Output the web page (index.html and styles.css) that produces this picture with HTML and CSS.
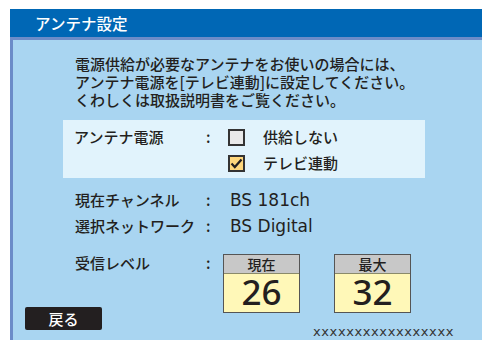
FILE: index.html
```html
<!DOCTYPE html>
<html lang="ja">
<head>
    <meta charset="UTF-8">
    <meta name="viewport" content="width=device-width, initial-scale=1.0">
    <title>アンテナ設定</title>
    <link rel="stylesheet" href="styles.css">
</head>
<body>
    <div class="window">
        <div class="titlebar">アンテナ設定</div>
        <div class="panel">
            <p class="notice">電源供給が必要なアンテナをお使いの場合には、<br>アンテナ電源を[テレビ連動]に設定してください。<br>くわしくは取扱説明書をご覧ください。</p>

            <div class="option-box">
                <div class="row">
                    <span class="label">アンテナ電源</span>
                    <span class="colon">:</span>
                    <div class="choices">
                        <div class="choice"><span class="check"></span>供給しない</div>
                        <div class="choice">
                            <span class="check on">
                                <svg width="13" height="13" viewBox="0 0 13 13"><polyline points="1.5,6.5 4.8,10 11.5,2.5" fill="none" stroke="#231f20" stroke-width="2.2"/></svg>
                            </span>テレビ連動
                        </div>
                    </div>
                </div>
            </div>

            <div class="row info first">
                <span class="label">現在チャンネル</span>
                <span class="colon">:</span>
                <span class="value">BS 181ch</span>
            </div>
            <div class="row info">
                <span class="label">選択ネットワーク</span>
                <span class="colon">:</span>
                <span class="value">BS Digital</span>
            </div>
            <div class="row info level-row">
                <span class="label">受信レベル</span>
                <span class="colon">:</span>
                <div class="levels">
                    <div class="level">
                        <div class="level-head">現在</div>
                        <div class="level-num">26</div>
                    </div>
                    <div class="level">
                        <div class="level-head">最大</div>
                        <div class="level-num">32</div>
                    </div>
                </div>
            </div>

            <div class="footer">
                <button class="back">戻る</button>
                <span class="code">xxxxxxxxxxxxxxxxx</span>
            </div>
        </div>
    </div>
</body>
</html>
```

FILE: styles.css
```css
body {
    margin: 0;
    background-color: #ffffff;
    font-family: "Noto Sans CJK JP", sans-serif;
    font-weight: 500;
    color: #231f20;
    overflow: hidden;
}
.window {
    margin: 9px 0 0 10px;
    height: 331px;
    display: flex;
    flex-direction: column;
}
.titlebar {
    height: 28px;
    line-height: 28px;
    padding-left: 25px;
    background-color: #0067b5;
    border-bottom: 3px solid #6c8cc8;
    color: #ffffff;
    font-size: 15.5px;
}
.panel {
    flex: 1;
    background-color: #a9d5f1;
    border-left: 3px solid #6c8cc8;
}
.notice {
    margin: 15px 0 0 62px;
    font-size: 15px;
    line-height: 18px;
}
.option-box {
    margin: 11px 0 0 50px;
    width: 351px;
    padding: 4px 0 2px 11px;
    background-color: #e1f3fc;
}
.row {
    display: grid;
    grid-template-columns: 130px 26px 1fr;
    font-size: 15px;
    line-height: 26px;
}
.info {
    padding-left: 62px;
    grid-template-columns: 129px 26px 1fr;
}
.info.first {
    margin-top: 9px;
}
.colon {
    padding-left: 2px;
}
.choices {
    margin-left: -2px;
}
.choice {
    display: flex;
    align-items: center;
    height: 26px;
}
.check {
    width: 13px;
    height: 13px;
    border: 2px solid #333333;
    background-color: #e9e9e9;
    margin-right: 18px;
    display: flex;
    align-items: center;
    justify-content: center;
}
.check.on {
    background-color: #ffd77c;
}
.value {
    font-family: "DejaVu Sans", sans-serif;
    font-weight: normal;
    font-size: 17px;
}
.level-row {
    margin-top: 11px;
}
.levels {
    display: flex;
    gap: 34px;
    margin: 4px 0 0 -7px;
}
.level {
    width: 75px;
    border: 1px solid #555555;
}
.level-head {
    height: 18px;
    line-height: 18px;
    background-color: #c8c8c8;
    border-bottom: 1px solid #8a8a6a;
    text-align: center;
    font-size: 14px;
}
.level-num {
    height: 38px;
    line-height: 36px;
    background-color: #fff8b8;
    text-align: center;
    font-family: "Noto Sans", sans-serif;
    font-size: 35px;
}
.footer {
    display: flex;
    align-items: flex-start;
    margin-top: -6px;
}
.back {
    margin-left: 12px;
    width: 77px;
    height: 23px;
    padding: 0;
    border: none;
    border-radius: 2px;
    background-color: #231f20;
    color: #ffffff;
    font-family: "Noto Sans CJK JP", sans-serif;
    font-weight: 500;
    font-size: 15px;
    line-height: 23px;
}
.code {
    margin: 18px 0 0 211px;
    font-family: "DejaVu Sans", sans-serif;
    font-weight: normal;
    font-size: 13px;
    line-height: 14px;
    letter-spacing: 0.6px;
    color: #333333;
}
```
